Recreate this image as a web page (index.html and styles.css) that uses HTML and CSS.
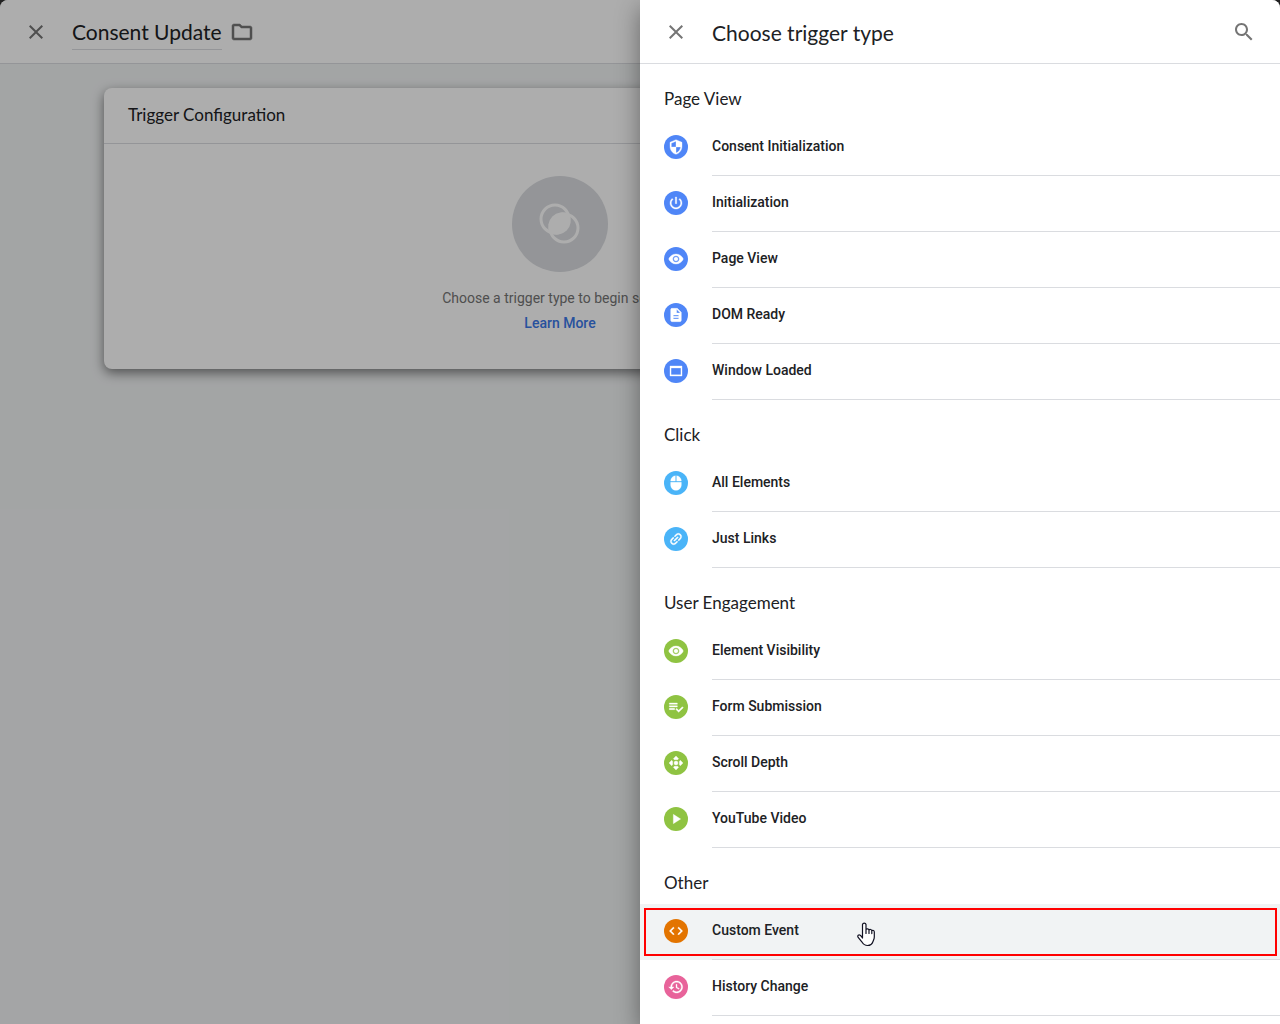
FILE: index.html
```html
<!DOCTYPE html>
<html lang="en">

<head>
    <meta charset="UTF-8">
    <meta name="viewport" content="width=device-width, initial-scale=1.0">
    <title>Choose trigger type</title>
    <link rel="stylesheet" href="styles.css">
</head>

<body>
    <main class="page">
        <header class="topbar">
            <button class="icon-button" type="button" aria-label="Close">
                <svg viewBox="0 0 24 24"><path d="M19 6.41L17.59 5 12 10.59 6.41 5 5 6.41 10.59 12 5 17.59 6.41 19 12 13.41 17.59 19 19 17.59 13.41 12z"/></svg>
            </button>
            <input class="trigger-name" type="text" value="Consent Update" aria-label="Trigger name">
            <button class="icon-button folder" type="button" aria-label="Folder">
                <svg viewBox="0 0 24 24"><path d="M9.17 6l2 2H20v10H4V6h5.17M10 4H4c-1.1 0-1.99.9-1.99 2L2 18c0 1.1.9 2 2 2h16c1.1 0 2-.9 2-2V8c0-1.1-.9-2-2-2h-8l-2-2z"/></svg>
            </button>
        </header>

        <section class="card">
            <h2 class="card-title">Trigger Configuration</h2>
            <div class="card-body">
                <svg class="card-icon" viewBox="0 0 96 96">
                    <circle cx="48" cy="48" r="48" fill="#dadce0"/>
                    <g fill="none" stroke="#fff" stroke-width="3">
                        <circle cx="43" cy="43" r="14"/>
                        <circle cx="52" cy="52" r="14"/>
                    </g>
                    <path d="M57 38A14 14 0 0 1 38 57A14 14 0 0 1 57 38z" fill="#fff"/>
                </svg>
                <p class="hint">Choose a trigger type to begin setup...</p>
                <a class="learn-more" href="#">Learn More</a>
            </div>
        </section>
    </main>

    <div class="backdrop"></div>

    <aside class="panel">
        <header class="topbar">
            <button class="icon-button" type="button" aria-label="Close">
                <svg viewBox="0 0 24 24"><path d="M19 6.41L17.59 5 12 10.59 6.41 5 5 6.41 10.59 12 5 17.59 6.41 19 12 13.41 17.59 19 19 17.59 13.41 12z"/></svg>
            </button>
            <h1 class="panel-title">Choose trigger type</h1>
            <button class="icon-button" type="button" aria-label="Search">
                <svg viewBox="0 0 24 24"><path d="M15.5 14h-.79l-.28-.27C15.41 12.59 16 11.11 16 9.5 16 5.91 13.09 3 9.5 3S3 5.91 3 9.5 5.91 16 9.5 16c1.61 0 3.09-.59 4.23-1.57l.27.28v.79l5 4.99L20.49 19l-4.99-5zm-6 0C7.01 14 5 11.99 5 9.5S7.01 5 9.5 5 14 7.01 14 9.5 11.99 14 9.5 14z"/></svg>
            </button>
        </header>

        <div class="panel-content">
            <h2 class="group-title">Page View</h2>
            <ul class="group blue">
                <li><button class="item" type="button">
                    <span class="badge"><svg viewBox="0 0 24 24"><path d="M12 1L3 5v6c0 5.55 3.84 10.74 9 12 5.16-1.26 9-6.45 9-12V5l-9-4zm0 10.99h7c-.53 4.12-3.28 7.79-7 8.94V12H5V6.3l7-3.11v8.8z"/></svg></span>
                    <span class="label">Consent Initialization</span>
                </button></li>
                <li><button class="item" type="button">
                    <span class="badge"><svg viewBox="0 0 24 24"><path d="M13 3h-2v10h2V3zm4.83 2.17l-1.42 1.42C17.99 7.86 19 9.81 19 12c0 3.87-3.13 7-7 7s-7-3.13-7-7c0-2.19 1.01-4.14 2.58-5.42L6.17 5.17C4.23 6.82 3 9.26 3 12c0 4.97 4.03 9 9 9s9-4.03 9-9c0-2.74-1.23-5.18-3.17-6.83z"/></svg></span>
                    <span class="label">Initialization</span>
                </button></li>
                <li><button class="item" type="button">
                    <span class="badge"><svg viewBox="0 0 24 24"><path d="M12 4.5C7 4.5 2.73 7.61 1 12c1.73 4.39 6 7.5 11 7.5s9.27-3.11 11-7.5c-1.73-4.39-6-7.5-11-7.5zM12 17c-2.76 0-5-2.24-5-5s2.24-5 5-5 5 2.24 5 5-2.24 5-5 5zm0-8c-1.66 0-3 1.34-3 3s1.34 3 3 3 3-1.34 3-3-1.34-3-3-3z"/></svg></span>
                    <span class="label">Page View</span>
                </button></li>
                <li><button class="item" type="button">
                    <span class="badge"><svg viewBox="0 0 24 24"><path d="M14 2H6c-1.1 0-1.99.9-1.99 2L4 20c0 1.1.89 2 1.99 2H18c1.1 0 2-.9 2-2V8l-6-6zm2 16H8v-2h8v2zm0-4H8v-2h8v2zm-3-5V3.5L18.5 9H13z"/></svg></span>
                    <span class="label">DOM Ready</span>
                </button></li>
                <li><button class="item" type="button">
                    <span class="badge"><svg viewBox="0 0 24 24"><path fill-rule="evenodd" d="M3 4.5h18v15H3zM4.6 7.4v10.4h14.8V7.4z"/></svg></span>
                    <span class="label">Window Loaded</span>
                </button></li>
            </ul>

            <h2 class="group-title">Click</h2>
            <ul class="group sky">
                <li><button class="item" type="button">
                    <span class="badge"><svg viewBox="0 0 24 24"><path d="M13 1.07V9h7c0-4.08-3.05-7.44-7-7.93zM4 15c0 4.42 3.58 8 8 8s8-3.58 8-8v-4H4v4zm7-13.93C7.05 1.56 4 4.92 4 9h7V1.07z"/></svg></span>
                    <span class="label">All Elements</span>
                </button></li>
                <li><button class="item" type="button">
                    <span class="badge"><svg viewBox="0 0 24 24"><path transform="rotate(-45 12 12)" d="M3.9 12c0-1.71 1.39-3.1 3.1-3.1h4V7H7c-2.76 0-5 2.24-5 5s2.24 5 5 5h4v-1.9H7c-1.71 0-3.1-1.39-3.1-3.1zM8 13h8v-2H8v2zm9-6h-4v1.9h4c1.71 0 3.1 1.39 3.1 3.1s-1.39 3.1-3.1 3.1h-4V17h4c2.76 0 5-2.24 5-5s-2.24-5-5-5z"/></svg></span>
                    <span class="label">Just Links</span>
                </button></li>
            </ul>

            <h2 class="group-title">User Engagement</h2>
            <ul class="group green">
                <li><button class="item" type="button">
                    <span class="badge"><svg viewBox="0 0 24 24"><path d="M12 4.5C7 4.5 2.73 7.61 1 12c1.73 4.39 6 7.5 11 7.5s9.27-3.11 11-7.5c-1.73-4.39-6-7.5-11-7.5zM12 17c-2.76 0-5-2.24-5-5s2.24-5 5-5 5 2.24 5 5-2.24 5-5 5zm0-8c-1.66 0-3 1.34-3 3s1.34 3 3 3 3-1.34 3-3-1.34-3-3-3z"/></svg></span>
                    <span class="label">Element Visibility</span>
                </button></li>
                <li><button class="item" type="button">
                    <span class="badge"><svg viewBox="0 0 24 24"><path d="M14 10H2v2h12v-2zm0-4H2v2h12V6zM2 16h8v-2H2v2zm19.5-4.5L23 13l-6.99 7-4.51-4.5L13 14l3.01 3 5.49-5.5z"/></svg></span>
                    <span class="label">Form Submission</span>
                </button></li>
                <li><button class="item" type="button">
                    <span class="badge"><svg viewBox="0 0 24 24"><path d="M12 1.5l4 4L14.5 7h-5L8 5.5zM12 22.5l4-4-1.5-1.5h-5L8 18.5zM1.5 12l4-4L7 9.5v5L5.5 16zM22.5 12l-4-4L17 9.5v5l1.5 1.5z"/><circle cx="12" cy="12" r="3"/></svg></span>
                    <span class="label">Scroll Depth</span>
                </button></li>
                <li><button class="item" type="button">
                    <span class="badge"><svg viewBox="0 0 24 24"><path d="M8 5v14l11-7z"/></svg></span>
                    <span class="label">YouTube Video</span>
                </button></li>
            </ul>

            <h2 class="group-title">Other</h2>
            <ul class="group">
                <li><button class="item orange active" type="button">
                    <span class="badge"><svg viewBox="0 0 24 24"><path d="M9.4 16.6L4.8 12l4.6-4.6L8 6l-6 6 6 6 1.4-1.4zm5.2 0l4.6-4.6-4.6-4.6L16 6l6 6-6 6-1.4-1.4z"/></svg></span>
                    <span class="label">Custom Event</span>
                    <svg class="pointer" viewBox="0 0 18 25"><path d="M5.5 16V2.5a1.8 1.8 0 0 1 3.5 0V7.5c.5-1 2.6-.8 3 .5.8-.9 2.400-.6 2.8.6.9-.6 2.500-.1 2.500 1.300V15c0 2-.8 3-1.300 4.500-.8 2.500-2.500 4-5.500 4-2.800 0-4.300-1.500-5.500-3.500L1.200 15.500c-1.200-2 .6-3.200 2-2.300.9.6 1.500 1.500 2.300 2.800M9 7.500V11.500M12 8v3.500M14.800 8.600v3" fill="#fff" stroke="#111122" stroke-width="1.2" stroke-linecap="round"/></svg>
                </button></li>
                <li><button class="item pink" type="button">
                    <span class="badge"><svg viewBox="0 0 24 24"><path d="M13 3c-4.97 0-9 4.03-9 9H1l3.89 3.89.07.14L9 12H6c0-3.87 3.13-7 7-7s7 3.13 7 7-3.13 7-7 7c-1.93 0-3.68-.79-4.94-2.06l-1.42 1.42C8.27 19.99 10.51 21 13 21c4.97 0 9-4.03 9-9s-4.03-9-9-9zm-1 5v5l4.28 2.54.72-1.21-3.5-2.08V8H12z"/></svg></span>
                    <span class="label">History Change</span>
                </button></li>
            </ul>
        </div>
    </aside>
</body>

</html>
```
FILE: styles.css
```css
* {
    box-sizing: border-box;
}

body {
    margin: 0;
    height: 100vh;
    overflow: hidden;
    background-color: #333333;
    font-family: Roboto, sans-serif;
    font-size: 14px;
    color: #202124;
}

h1,
h2,
p,
ul {
    margin: 0;
    padding: 0;
}

h1,
h2,
.trigger-name {
    font-family: Lato, sans-serif;
    font-weight: 400;
}

button {
    border: none;
    background: none;
    padding: 0;
    font: inherit;
    color: inherit;
    cursor: pointer;
}

.page {
    height: 100%;
    background-color: #f1f3f4;
    border-radius: 8px 8px 0 0;
    overflow: hidden;
}

.topbar {
    display: flex;
    align-items: center;
    height: 64px;
    padding: 0 24px;
    background-color: #ffffff;
    border-bottom: 1px solid #dadce0;
}

.icon-button {
    width: 24px;
    height: 24px;
}

.icon-button svg {
    display: block;
    fill: #757575;
}

.folder svg {
    stroke: #757575;
    stroke-width: 0.5;
}

.trigger-name {
    field-sizing: content;
    height: 36px;
    margin: 0 8px 0 24px;
    padding: 0;
    border: none;
    border-bottom: 1px solid #dadce0;
    background: none;
    font-size: 21px;
    color: inherit;
}

.card {
    max-width: 912px;
    margin: 24px 104px;
    background-color: #ffffff;
    border-radius: 8px;
    box-shadow: 0 4px 12px rgba(0, 0, 0, 0.5);
}

.card-title {
    padding: 0 24px 2px;
    font-size: 17px;
    line-height: 53px;
    border-bottom: 1px solid #dadce0;
}

.card-body {
    display: flex;
    flex-direction: column;
    align-items: center;
    padding: 32px 24px 33px;
}

.card-icon {
    width: 96px;
    height: 96px;
}

.hint {
    margin-top: 14px;
    line-height: 24px;
    color: #757575;
}

.learn-more {
    line-height: 26px;
    font-weight: 500;
    color: #3a78e8;
    text-decoration: none;
}

.backdrop {
    position: absolute;
    inset: 0;
    background-color: rgba(0, 0, 0, 0.32);
}

.panel {
    position: absolute;
    top: 0;
    right: 0;
    bottom: 0;
    width: 50%;
    background-color: #ffffff;
    border-top-right-radius: 8px;
    box-shadow: 0 8px 24px rgba(0, 0, 0, 0.4);
}

.panel .topbar {
    background: none;
}

.panel-title {
    flex: 1;
    margin-left: 24px;
    padding-top: 2px;
    font-size: 21px;
}

.panel-content {
    height: calc(100% - 64px);
    overflow: hidden;
}

.group-title {
    padding: 15px 24px 0;
    height: 56px;
    font-size: 17px;
    line-height: 40px;
}

.group {
    list-style: none;
}

.item {
    position: relative;
    display: flex;
    align-items: flex-start;
    width: 100%;
    height: 56px;
    padding: 15px 0 0 24px;
    gap: 24px;
    text-align: left;
}

.badge {
    display: flex;
    align-items: center;
    justify-content: center;
    width: 24px;
    height: 24px;
    border-radius: 50%;
}

.badge svg {
    width: 16px;
    height: 16px;
    fill: #ffffff;
    stroke: #ffffff;
    stroke-width: 0.5;
}

.label {
    flex: 1;
    height: 41px;
    line-height: 22px;
    font-weight: 500;
    border-bottom: 1px solid #dadce0;
}

.blue .badge {
    background-color: #4f86f7;
}

.sky .badge {
    background-color: #4ab4f8;
}

.green .badge {
    background-color: #8fc342;
}

.orange .badge {
    background-color: #e37400;
}

.pink .badge {
    background-color: #e8639a;
}

.active {
    background-color: #f1f3f4;
}

/* red frame around the selected trigger */
.active::after {
    content: "";
    position: absolute;
    inset: 4px 3px 4px 4px;
    border: 2px solid #ff0000;
}

.pointer {
    position: absolute;
    left: 217px;
    top: 18px;
    width: 18px;
    height: 25px;
}
```
